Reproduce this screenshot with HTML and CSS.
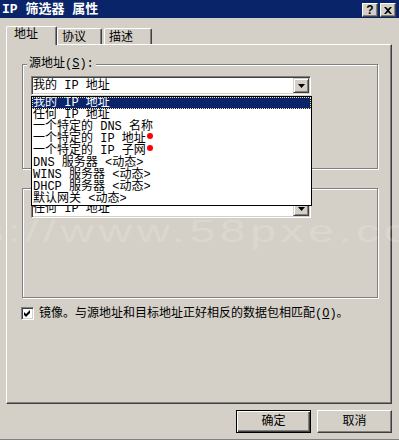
FILE: index.html
```
<!DOCTYPE html>
<html lang="zh-CN">
<head>
    <meta charset="UTF-8">
    <title>IP 筛选器 属性</title>
    <link rel="stylesheet" href="styles.css">
</head>
<body>
    <div class="dialog">
        <div class="titlebar">
            <span class="title">IP 筛选器 属性</span>
            <div class="caption-btns">
                <span class="cap-btn cap-help">?</span>
                <span class="cap-btn">
                    <svg width="8" height="7" viewBox="0 0 8 7">
                        <path d="M0 0h2l2 2 2-2h2L5 3.5 8 7H6L4 5 2 7H0l3-3.5z" fill="#000"/>
                    </svg>
                </span>
            </div>
        </div>

        <div class="content">
            <div class="tabs">
                <div class="tab tab-active">地址</div>
                <div class="tab tab-proto">协议</div>
                <div class="tab tab-desc">描述</div>
            </div>

            <div class="panel">
                <div class="group group-src">
                    <div class="group-label">源地址(<u>S</u>):</div>
                    <div class="combo">
                        <span class="combo-text">我的 IP 地址</span>
                        <span class="combo-btn">
                            <svg width="7" height="4" viewBox="0 0 7 4"><path d="M0 0h7L3.5 4z" fill="#000"/></svg>
                        </span>
                        <ul class="droplist">
                            <li class="selected">我的 IP 地址</li>
                            <li>任何 IP 地址</li>
                            <li>一个特定的 DNS 名称</li>
                            <li>一个特定的 IP 地址<span class="mark"></span></li>
                            <li>一个特定的 IP 子网<span class="mark"></span></li>
                            <li>DNS 服务器 &lt;动态&gt;</li>
                            <li>WINS 服务器 &lt;动态&gt;</li>
                            <li>DHCP 服务器 &lt;动态&gt;</li>
                            <li>默认网关 &lt;动态&gt;</li>
                        </ul>
                    </div>
                </div>

                <div class="group group-dst">
                    <div class="group-label">目标地址(<u>D</u>):</div>
                    <div class="combo">
                        <span class="combo-text">任何 IP 地址</span>
                        <span class="combo-btn">
                            <svg width="7" height="4" viewBox="0 0 7 4"><path d="M0 0h7L3.5 4z" fill="#000"/></svg>
                        </span>
                    </div>
                </div>

                <label class="check">
                    <span class="check-box">
                        <svg width="7" height="7" viewBox="0 0 7 7"><path d="M0 2l2 2 4-4v3L2 7 0 5z" fill="#000"/></svg>
                    </span>
                    <span>镜像。与源地址和目标地址正好相反的数据包相匹配(<u>O</u>)。</span>
                </label>
            </div>

            <div class="buttons">
                <div class="btn btn-default">确定</div>
                <div class="btn">取消</div>
            </div>
        </div>

        <div class="watermark">ps://www.58pxe.com</div>
    </div>
</body>
</html>
```

FILE: styles.css
```
* {
    box-sizing: border-box;
}
body {
    margin: 0;
    width: 399px;
    height: 440px;
    overflow: hidden;
    background: #d4d0c8;
    font-family: "Liberation Mono", "Noto Sans CJK SC", monospace;
    font-size: 12px;
    color: #000;
}
.dialog {
    position: relative;
    height: 440px;
    border-bottom: 1px solid #808080;
    display: flex;
    flex-direction: column;
}
.titlebar {
    height: 18px;
    background: #0a246a;
    display: flex;
    justify-content: space-between;
    align-items: flex-start;
    padding: 0 3px 0 2px;
}
.title {
    color: #fff;
    font-weight: bold;
    font-size: 13px;
    line-height: 19px;
}
.caption-btns {
    display: flex;
    gap: 2px;
    margin-top: 3px;
}
.cap-btn {
    width: 16px;
    height: 14px;
    background: #d4d0c8;
    border-top: 1px solid #fff;
    border-left: 1px solid #fff;
    border-right: 1px solid #404040;
    border-bottom: 1px solid #404040;
    box-shadow: inset -1px -1px 0 #808080;
    display: flex;
    align-items: center;
    justify-content: center;
}
.cap-help {
    font-family: "Liberation Sans", sans-serif;
    font-weight: bold;
    font-size: 12px;
    line-height: 12px;
}
.content {
    flex: 1;
    padding: 8px 7px 0 6px;
    display: flex;
    flex-direction: column;
}
.tabs {
    display: flex;
    align-items: flex-end;
    height: 18px;
    position: relative;
    z-index: 1;
}
.tab {
    height: 16px;
    padding: 3px 0 0 4px;
    line-height: 12px;
    border-top: 1px solid #fff;
    border-left: 1px solid #fff;
    border-right: 1px solid #404040;
    box-shadow: inset -1px 0 0 #808080;
    border-radius: 2px 2px 0 0;
}
.tab-active {
    width: 51px;
    height: 19px;
    margin-bottom: -1px;
    padding: 2px 0 0 7px;
    background: #d4d0c8;
}
.tab-proto {
    width: 45px;
}
.tab-desc {
    width: 48px;
    margin-left: 2px;
}
.panel {
    height: 360px;
    border-top: 1px solid #fff;
    border-left: 1px solid #fff;
    border-right: 1px solid #404040;
    border-bottom: 1px solid #404040;
    box-shadow: inset -1px -1px 0 #808080;
    padding: 19px 13px 0 15px;
}
.group {
    border: 1px solid #808080;
    box-shadow: inset 1px 1px 0 #fff, 1px 1px 0 #fff;
    padding: 0 8px;
}
.group-src {
    height: 105px;
    position: relative;
    z-index: 2;
}
.group-dst {
    height: 110px;
    margin-top: 19px;
}
.group-label {
    width: max-content;
    margin: -7px 0 0 -4px;
    padding: 0 2px;
    line-height: 12px;
    background: #d4d0c8;
}
.group-dst .group-label {
    margin-left: 4px;
}
.combo {
    position: relative;
    width: 280px;
    height: 19px;
    margin-top: 6px;
    background: #fff;
    border-top: 1px solid #808080;
    border-left: 1px solid #808080;
    border-right: 1px solid #fff;
    border-bottom: 1px solid #fff;
    box-shadow: inset 1px 1px 0 #404040, inset -1px -1px 0 #d4d0c8;
    display: flex;
    align-items: center;
    justify-content: space-between;
    padding: 0 1px 0 1px;
}
.group-dst .combo {
    margin-top: 5px;
}
.combo-text {
    line-height: 12px;
    padding-top: 1px;
}
.combo-btn {
    width: 16px;
    height: 15px;
    background: #d4d0c8;
    border-top: 1px solid #d4d0c8;
    border-left: 1px solid #d4d0c8;
    border-right: 1px solid #404040;
    border-bottom: 1px solid #404040;
    box-shadow: inset 1px 1px 0 #fff, inset -1px -1px 0 #808080;
    display: flex;
    align-items: center;
    justify-content: center;
}
.droplist {
    position: absolute;
    top: 19px;
    left: -1px;
    width: 281px;
    height: 110px;
    margin: 0;
    padding: 0;
    list-style: none;
    background: #fff;
    border: 1px solid #000;
    overflow: hidden;
}
.droplist li {
    height: 12px;
    line-height: 12px;
    padding-left: 1px;
    white-space: nowrap;
}
.droplist li.selected {
    background: #0a246a;
    color: #fff;
    outline: 1px dotted #f0e8a0;
    outline-offset: -1px;
}
.mark {
    display: inline-block;
    width: 6px;
    height: 6px;
    margin-left: 1px;
    border-radius: 50%;
    background: #f00;
    vertical-align: 3px;
}
.check {
    display: flex;
    align-items: center;
    gap: 5px;
    height: 13px;
    margin: 9px 0 0 -1px;
    line-height: 12px;
}
.check-box {
    width: 13px;
    height: 13px;
    background: #fff;
    border-top: 1px solid #808080;
    border-left: 1px solid #808080;
    border-right: 1px solid #fff;
    border-bottom: 1px solid #fff;
    box-shadow: inset 1px 1px 0 #404040, inset -1px -1px 0 #d4d0c8;
    display: flex;
    align-items: center;
    justify-content: center;
}
.buttons {
    display: flex;
    justify-content: flex-end;
    gap: 6px;
    margin-top: 6px;
}
.btn {
    width: 75px;
    height: 23px;
    border-top: 1px solid #fff;
    border-left: 1px solid #fff;
    border-right: 1px solid #404040;
    border-bottom: 1px solid #404040;
    box-shadow: inset -1px -1px 0 #808080;
    display: flex;
    align-items: center;
    justify-content: center;
    line-height: 12px;
}
.btn-default {
    border: 1px solid #000;
    box-shadow: inset 1px 1px 0 #fff, inset -1px -1px 0 #404040, inset -2px -2px 0 #808080;
}
.watermark {
    position: absolute;
    top: 216px;
    left: -50px;
    font-family: "Liberation Sans", sans-serif;
    font-size: 31px;
    line-height: 31px;
    letter-spacing: 3px;
    white-space: nowrap;
    color: rgba(255, 255, 255, 0.16);
    transform: scaleX(1.5);
    transform-origin: left top;
    pointer-events: none;
    z-index: 5;
}
```
